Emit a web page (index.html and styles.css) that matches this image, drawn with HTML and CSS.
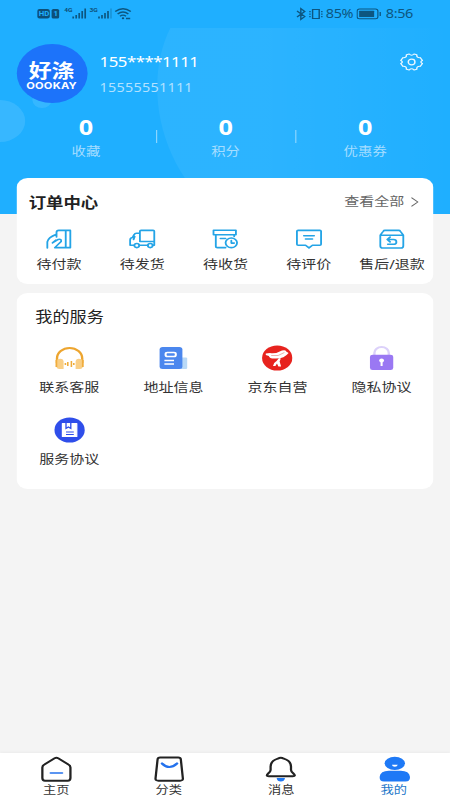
FILE: index.html
```html
<!DOCTYPE html>
<html lang="zh-CN">
<head>
<meta charset="utf-8">
<title>我的</title>
<link rel="stylesheet" href="styles.css">
</head>
<body>
<div class="screen">
  <header class="hero">
    <svg class="bubbles" viewBox="0 0 375 214" preserveAspectRatio="none">
      <defs><linearGradient id="glow" x1="0" y1="0" x2="1" y2="0"><stop offset="0" stop-color="#fff" stop-opacity=".06"/><stop offset=".35" stop-color="#fff" stop-opacity=".06"/><stop offset="1" stop-color="#fff" stop-opacity="0"/></linearGradient></defs>
      <path d="M142 28H375V214H182C130 165 120 80 142 28Z" fill="url(#glow)"/>
      <circle cx="0" cy="121" r="21" fill="#fff" opacity=".11"/>
      <circle cx="35" cy="100" r="8" fill="#fff" opacity=".1"/>
    </svg>
    <div class="status">
      <svg class="signals" viewBox="0 0 80 14">
        <rect x="0" y="2" width="10.5" height="9.500" rx="2"/><rect x="12" y="2" width="6.300" height="9.500" rx="1.500"/>
        <text class="cut" x="1.300" y="9.200">HD</text><text class="cut" x="13.500" y="9.200">1</text>
        <text x="22.500" y="5.200">4G</text><text x="43.500" y="5.200">3G</text>
        <path class="bars" d="M30 11.500V9.500M32.500 11.500V8M35 11.500V6M37.500 11.500V4M40 11.500V1.500M51.500 11.500V9.500M54 11.500V8M56.500 11.500V6M59 11.500V4"/>
        <path class="bars dim" d="M61.500 11.500V1.500"/>
        <path class="wave" d="M65 4.500Q71.500-1 78 4.500M67 7Q71.500 3 76 7M69 9.300Q71.500 7 74 9.300"/><circle cx="71.500" cy="11.300" r="1"/><path class="wave" d="M74 11.500h3.500"/>
      </svg>
      <div class="status-right">
        <svg class="bt" viewBox="0 0 26 14"><path d="M2.500 4L9 9.500L5.700 12.500V1.500L9 4.500L2.500 10M15.500 2.500h5.500v9h-5.500zM13.300 4v1.200M13.300 6.500v1.200M13.300 9v1.200M23.200 4v1.200M23.200 6.500v1.200M23.200 9v1.200"/></svg>
        <span class="pct">85%</span>
        <svg class="battery" viewBox="0 0 21 12"><rect class="shell" x=".6" y="1" width="17.300" height="9.800" rx="2"/><rect x="2.300" y="2.800" width="12.500" height="6.200" rx=".5"/><path d="M19.300 4h1.100v4h-1.100z"/></svg>
        <span class="time">8:56</span>
      </div>
    </div>
    <div class="profile">
      <div class="avatar"><b>好涤</b><i>OOOKAY</i></div>
      <div class="who"><p class="name">155****1111</p><p class="phone">15555551111</p></div>
      <svg class="gear" viewBox="0 0 20 18"><path d="M8 1Q10 3.500 12 1L14.300 1.800Q14 5 17.300 4.700L19 7.500Q16.500 9 19 10.500L17.300 13.300Q14 13 14.300 16.200L12 17Q10 14.500 8 17L5.700 16.200Q6 13 2.700 13.300L1 10.500Q3.500 9 1 7.500L2.700 4.700Q6 5 5.700 1.800Z"/><circle cx="10" cy="9" r="2.800"/></svg>
    </div>
    <div class="stats">
      <div class="stat"><strong>0</strong><span>收藏</span></div>
      <div class="stat"><strong>0</strong><span>积分</span></div>
      <div class="stat"><strong>0</strong><span>优惠券</span></div>
    </div>
  </header>

  <section class="card orders">
    <div class="card-head">
      <h2>订单中心</h2>
      <a class="more">查看全部<svg viewBox="0 0 8 12"><path d="M1 1L7 6L1 11"/></svg></a>
    </div>
    <div class="order-row">
      <div class="item"><svg class="line" viewBox="0 0 24 24"><path d="M9.500 10V5q0-2 2-2H21.500V21H12.500M17.500 3V21M1.500 21.500V15Q2 10.500 9.500 7M6 16L11 12.500Q14 11.500 13.500 14.500L8 21H12.500M6 16L9 13"/></svg><span>待付款</span></div>
      <div class="item"><svg class="line" viewBox="0 0 24 24"><path d="M10 14.500V4Q10 3 11 3H21.500Q22.500 3 22.500 4V14.500H10M10 6H7Q5.500 6 5 7.500L3.500 10.500Q1.500 11 1.500 13V18.500H5M9.500 18.500H17M21 18.500h1.500V14.500M5.500 9.500L4.500 12.500"/><circle cx="7.300" cy="18.900" r="2.100"/><circle cx="19" cy="18.900" r="2.100"/></svg><span>待发货</span></div>
      <div class="item"><svg class="line" viewBox="0 0 24 24"><path d="M2 2.800H21.500V7.500H2ZM4 7.500V19.500Q4 21 5.500 21H12.500M20 7.500V9.500M8 11.500H12.500M17.500 13.500V16.300H20"/><circle cx="17.500" cy="16" r="5"/></svg><span>待收货</span></div>
      <div class="item"><svg class="line" viewBox="0 0 24 24"><path d="M2.500 3H21.500Q22.500 3 22.500 4V17.500Q22.500 18.500 21.500 18.500H15L12 21.300 9 18.500H2.500Q1.500 18.500 1.500 17.500V4Q1.500 3 2.500 3ZM7.500 8.500H16.500M9 12H15"/></svg><span>待评价</span></div>
      <div class="item"><svg class="line" viewBox="0 0 24 24"><path d="M2 8L4.500 4Q5 3 6 3H18Q19 3 19.500 4L22 8V19Q22 21.500 20 21.500H4Q2 21.500 2 19ZM2 8H22M10.500 10L8 12.500L10.500 15M8 12.500H13.500Q16 12.500 16 15T13.500 17.500H8.500"/></svg><span>售后/退款</span></div>
    </div>
  </section>

  <section class="card services">
    <h2>我的服务</h2>
    <div class="grid">
      <div class="item"><svg viewBox="0 0 26 26"><path d="M2.500 18V13.500A10.500 10.500 0 0 1 23.500 13.500V18" fill="none" stroke="#eda52f" stroke-width="2"/><path d="M2 15q5-3 6 1v8H4.500Q2 24 2 21ZM24 15q-5-3-6 1v8h3.500Q24 24 24 21Z" fill="#f9cf86"/><path d="M2 15v7M24 15v7" stroke="#f0ad3d" stroke-width="1.500"/><path d="M11.500 17v4M14.500 16v6M9.500 18v2M16.500 18v2" stroke="#efac39" stroke-width="1.300"/></svg><span>联系客服</span></div>
      <div class="item"><svg viewBox="0 0 26 26"><rect x="18" y="12.500" width="6" height="11.500" rx="1" fill="#b9d9f7"/><rect x="1" y="2" width="19" height="22" rx="2.500" fill="#4b87ee"/><rect x="6" y="7.500" width="8.500" height="4" rx="1.500" fill="none" stroke="#fff" stroke-width="1.700"/><path d="M5 15.500h8M5 19h8" stroke="#fff" stroke-width="1.500"/></svg><span>地址信息</span></div>
      <div class="item"><svg viewBox="0 0 26 26"><circle cx="13" cy="13" r="12.600" fill="#e7231e"/><path d="M3.500 8.500L7 8Q12 9 17 5.500Q20 4.500 20.500 6.500L22.500 8Q19 13.500 12 13.500Q6.500 14 6 11L3.500 10Z" fill="#fff"/><path d="M14.500 13L16 13.500L15 16.500L16.300 21.500H14L12.800 18.500L11.500 21H9.500Q10 17.500 12.500 16Z" fill="#fff"/><path d="M8 10.500Q14 12 19 7.500" stroke="#e99a95" stroke-width=".7" fill="none"/></svg><span>京东自营</span></div>
      <div class="item"><svg viewBox="0 0 26 26"><path d="M7 11V8a6 6 0 0 1 12 0v3" fill="none" stroke="#dcd1fa" stroke-width="2"/><rect x="3.300" y="9.800" width="19.400" height="15.200" rx="2.200" fill="#9a78f3"/><circle cx="13" cy="15.500" r="2" fill="#fff"/><path d="M13 16v5" stroke="#fff" stroke-width="1.700"/></svg><span>隐私协议</span></div>
      <div class="item"><svg viewBox="0 0 26 26"><circle cx="13" cy="13" r="12.600" fill="#2f4eea"/><path d="M7 6.500H19V19.500H7Z" fill="#fff" stroke="#fff" stroke-linejoin="round"/><path d="M10 6v5.500l2-1.500 2 1.500V6M10 15h6.500M10 17.500h6.500" fill="none" stroke="#2f4eea" stroke-width="1.100"/></svg><span>服务协议</span></div>
    </div>
  </section>

  <nav class="tabs">
    <a class="tab"><svg viewBox="0 0 26 26"><path class="ink" d="M3 8.500L11.500 2.200Q13 1.200 14.500 2.200L23 8.500Q24.700 9.500 24.700 11.500V22Q24.700 24.700 22.500 24.700H3.500Q1.300 24.700 1.300 22V11.500Q1.300 9.500 3 8.500Z"/><path class="accent" d="M8 17H18"/></svg><span>主页</span></a>
    <a class="tab"><svg viewBox="0 0 26 26"><path class="ink" d="M5.500 1.500H20.500Q22.500 1.500 22.700 3.500L24.400 22.500Q24.500 24.700 22 24.700H4Q1.500 24.700 1.600 22.500L3.300 3.500Q3.500 1.500 5.500 1.500Z"/><path class="accent curve" d="M7 7.500Q13 14.500 19.500 7.500"/></svg><span>分类</span></a>
    <a class="tab"><svg viewBox="0 0 26 26"><path d="M9.500 22H16.500Q16 25.500 13 25.500T9.500 22Z" fill="#2079f3"/><path class="ink" d="M10.500 2.700Q13 .6 15.500 2.700Q21.500 5 21.500 10.500V14Q21.500 15.500 23.500 17.500Q26 20.300 23 20.300H3Q0 20.300 2.500 17.500Q4.500 15.500 4.500 14V10.500Q4.500 5 10.500 2.700Z"/></svg><span>消息</span></a>
    <a class="tab active"><svg viewBox="0 0 26 26"><ellipse cx="13" cy="7.300" rx="8.500" ry="6.600" fill="#1e79f6"/><path d="M.3 21Q1 14.800 8 14.800H18Q25 14.800 25.700 21Q25.700 25.500 22 25.500H4Q.3 25.500 .3 21Z" fill="#1e79f6"/><path d="M10.500 8.800h5q-.5 2-2.500 2t-2.500-2Z" fill="#fff"/></svg><span>我的</span></a>
  </nav>
</div>
</body>
</html>
```
FILE: styles.css
```css
* { box-sizing: border-box; margin: 0; padding: 0; }
html, body { width: 450px; height: 800px; overflow: hidden; }
body { font-family: "Noto Sans", "Noto Sans CJK SC", sans-serif; background: #f4f4f4; }
svg { display: block; }

/* 375-unit design width, widened to fill the window */
.screen {
  width: 375px; height: 800px;
  display: flex; flex-direction: column;
  transform: scaleX(1.2); transform-origin: 0 0;
  background: #f4f4f4;
}

.hero { height: 214px; flex: none; position: relative; background: #1fafff; }
.bubbles { position: absolute; inset: 0; width: 100%; height: 100%; }
.status {
  position: relative; height: 28px; padding: 0 30.5px 0 30.5px;
  display: flex; align-items: center; justify-content: space-between;
  color: #0d5680;
}
.signals { width: 80px; height: 14px; fill: #0d4f78; font: bold 5.5px Roboto, sans-serif; }
.signals .cut { fill: #1fafff; font-size: 6.5px; }
.bars { stroke: #0d5680; stroke-width: 1.4; }
.dim { opacity: .3; }
.wave { stroke: #0d5680; stroke-width: 1.3; fill: none; }
.status-right { display: flex; align-items: center; font: 12px/28px "Noto Sans", sans-serif; }
.bt { width: 26px; height: 14px; fill: none; stroke: #0d5680; stroke-width: 1.2; }
.pct { width: 24px; margin-left: 1px; letter-spacing: -.3px; }
.battery { width: 21px; height: 12px; margin: 0 4px 0 1px; fill: #0d5680; }
.battery .shell { fill: none; stroke: #0d5680; }
.time { width: 23px; white-space: nowrap; letter-spacing: -.3px; }

.profile { position: relative; height: 76px; padding: 16px 14px 0 13.5px; display: flex; }
.avatar {
  width: 59px; height: 59px; border-radius: 50%; background: #1c73fa; color: #fff;
  display: flex; flex-direction: column; align-items: center; padding-top: 17px;
}
.avatar b { font: 700 19px/19px "Noto Sans CJK SC", sans-serif; margin-top: -1.5px; }
.avatar i { font: bold 9.3px/9px Inter, sans-serif; letter-spacing: .2px; margin-top: 2px; }
.who { margin-left: 10.5px; flex: 1; color: #fff; }
.name { font-size: 14px; line-height: 20px; margin-top: 8px; letter-spacing: -.42px; padding-bottom: 6px; }
.phone { font-size: 12px; line-height: 20px; color: #b2e1ff; letter-spacing: .2px; }
.gear { width: 20px; height: 18px; margin: 9px 8px 0 0; fill: none; stroke: #eaf7ff; stroke-width: 1.2; stroke-linejoin: round; }

.stats { position: relative; display: flex; padding: 11px 12.5px 0 13.5px; }
.stat { flex: 1; position: relative; display: flex; flex-direction: column; align-items: center; color: #fff; }
.stat strong { font-size: 21px; line-height: 25px; }
.stat span { font-size: 12px; line-height: 18px; margin-top: 3px; color: #a5ddff; }
.stat + .stat::before { content: ""; position: absolute; left: 0; top: 15px; width: 1px; height: 13px; background: #8ad5ff; }

.card { position: relative; width: 347px; margin-left: 14.4px; background: #fff; border-radius: 9px; flex: none; color: #333; }
.orders { margin-top: -36px; height: 106px; }
.card-head { display: flex; justify-content: space-between; align-items: center; padding: 12px 12.5px 0 9.5px; height: 36px; }
h2 { font-size: 14.5px; line-height: 24px; color: #222; font-weight: 700; }
.more { display: flex; align-items: center; gap: 5px; font-size: 12.5px; line-height: 24px; color: #666; }
.more svg { width: 7px; height: 12px; fill: none; stroke: #666; stroke-width: 1.1; }
.order-row { display: flex; padding-top: 13px; }
.item { flex: 1; display: flex; flex-direction: column; align-items: center; font-size: 12.5px; line-height: 18px; white-space: nowrap; }
.line { width: 23px; height: 24px; fill: none; stroke: #24a4e6; stroke-width: 1.6; stroke-linejoin: round; stroke-linecap: round; }
.order-row span { margin-top: 5px; }

.services { margin-top: 9px; height: 196px; padding-top: 12px; }
.services h2 { font-size: 14.3px; font-weight: 400; padding-left: 15px; }
.grid { display: grid; grid-template-columns: repeat(4, 1fr); grid-auto-rows: 72px; padding-top: 16px; }
.grid svg { width: 26px; height: 26px; }
.grid span { margin-top: 8px; }

.tabs { margin-top: auto; height: 47px; flex: none; background: #fff; display: flex; box-shadow: 0 -1px 3px rgba(0,0,0,.04); }
.tab { flex: 1; display: flex; flex-direction: column; align-items: center; padding-top: 3px; color: #333; font-size: 11px; line-height: 16px; }
.tab svg { width: 26px; height: 26px; }
.tab.active { color: #2377c9; }
.tab.active svg { margin-left: 2px; }
.ink { fill: none; stroke: #222; stroke-width: 1.9; stroke-linejoin: round; }
.accent { fill: none; stroke: #2472ed; stroke-width: 1.5; stroke-linecap: round; }
.curve { stroke-width: 2.2; }
```
